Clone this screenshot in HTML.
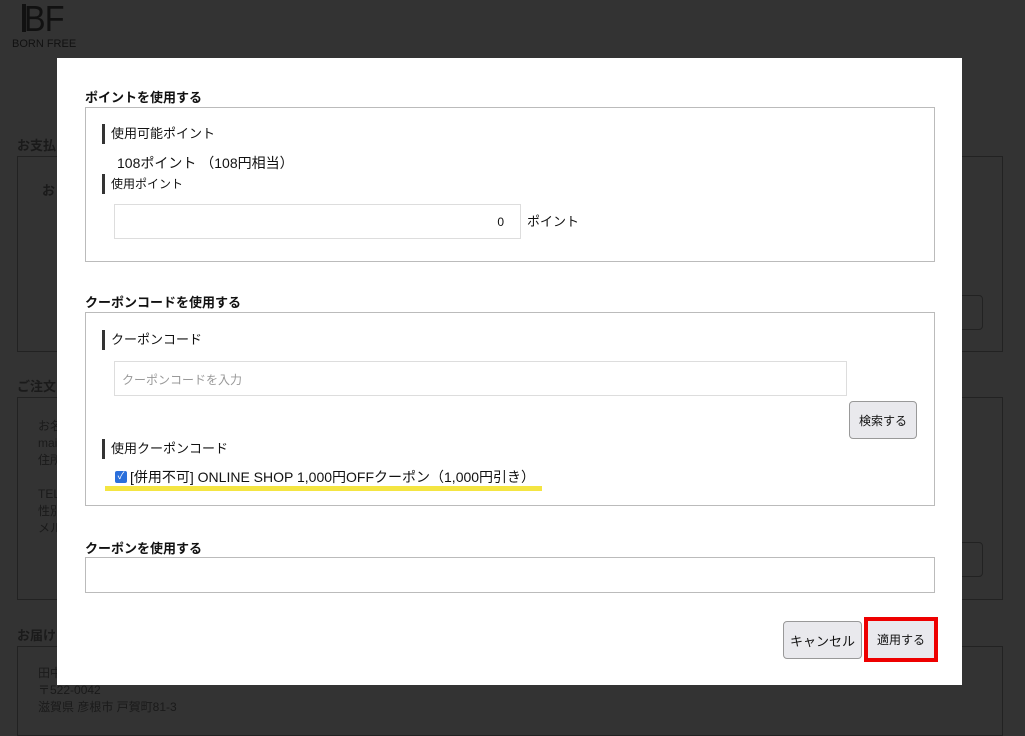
<!DOCTYPE html>
<html><head><meta charset="utf-8"><style>
*{box-sizing:border-box;margin:0;padding:0}
body{width:1025px;height:723px;overflow:hidden;background:#333;font-family:"Liberation Sans","Noto Sans CJK JP",sans-serif;color:#111;position:relative}
.a{position:absolute}
.bg{color:#1a1a1a;font-size:12px}
.bgbox{position:absolute;border:1px solid #222}
.m{position:absolute;left:57px;top:58px;width:905px;height:627px;background:#fff}
.t{position:absolute;font-size:13px;font-weight:bold;color:#111}
.box{position:absolute;border:1px solid #bbb}
.lb{position:absolute;font-size:13px;border-left:3px solid #333;padding-left:6px;line-height:20px}
.in{position:absolute;border:1px solid #ddd;background:#fff}
.btn{position:absolute;background:#e9e9ed;border:1px solid #999;border-radius:4px;font-size:12px;display:flex;align-items:center;justify-content:center}
</style></head><body>
<div class="a" style="left:22px;top:4px;width:4px;height:28px;background:#111"></div>
<div class="a" style="left:24px;top:-2px;font-size:36px;color:#111;letter-spacing:-1px;font-weight:300;transform:scaleX(0.9);transform-origin:left">BF</div>
<div class="a" style="left:12px;top:38px;font-size:11px;color:#111">BORN FREE</div>
<div class="a bg" style="left:17px;top:135px;font-weight:bold;font-size:13px">お支払</div>
<div class="bgbox" style="left:17px;top:156px;width:986px;height:196px"></div>
<div class="a bg" style="left:42px;top:180px;font-weight:bold;font-size:13px">お</div>
<div class="a bg" style="left:17px;top:376px;font-weight:bold;font-size:13px">ご注文</div>
<div class="bgbox" style="left:17px;top:397px;width:986px;height:203px"></div>
<div class="a bg" style="left:38px;top:418px;line-height:17px">お名<br>mai<br>住所<br><br>TEL<br>性別<br>メル</div>
<div class="a bg" style="left:17px;top:625px;font-weight:bold;font-size:13px">お届け</div>
<div class="bgbox" style="left:17px;top:646px;width:986px;height:90px"></div>
<div class="a bg" style="left:38px;top:665px;line-height:17px">田中<br>〒522-0042<br>滋賀県 彦根市 戸賀町81-3</div>
<div class="a" style="left:948px;top:295px;width:35px;height:35px;border:1px solid #222;border-radius:4px"></div>
<div class="a" style="left:948px;top:542px;width:35px;height:35px;border:1px solid #222;border-radius:4px"></div>

<div class="m"></div>
<div class="t" style="left:85px;top:87px">ポイントを使用する</div>
<div class="box" style="left:85px;top:107px;width:850px;height:155px"></div>
<div class="lb" style="left:102px;top:124px">使用可能ポイント</div>
<div class="a" style="left:117px;top:153px;font-size:14px">108ポイント （108円相当）</div>
<div class="lb" style="left:102px;top:174px;font-size:12px">使用ポイント</div>
<div class="in" style="left:114px;top:204px;width:407px;height:35px"><span class="a" style="right:16px;top:10px;font-size:12px">0</span></div>
<div class="a" style="left:527px;top:211px;font-size:13px">ポイント</div>

<div class="t" style="left:85px;top:292px">クーポンコードを使用する</div>
<div class="box" style="left:85px;top:312px;width:850px;height:194px"></div>
<div class="lb" style="left:102px;top:330px">クーポンコード</div>
<div class="in" style="left:114px;top:361px;width:733px;height:35px"><span class="a" style="left:7px;top:9px;font-size:12px;color:#999">クーポンコードを入力</span></div>
<div class="btn" style="left:849px;top:401px;width:68px;height:38px">検索する</div>
<div class="lb" style="left:102px;top:439px">使用クーポンコード</div>
<div class="a" style="left:105px;top:486px;width:437px;height:5px;background:#f4e542"></div>
<div class="a" style="left:115px;top:471px;width:12px;height:12px;background:#2a6fdb;border-radius:2px;color:#fff;font-size:10px;line-height:12px;text-align:center">✓</div>
<div class="a" style="left:130px;top:467px;font-size:14px;white-space:nowrap">[併用不可] ONLINE SHOP 1,000円OFFクーポン（1,000円引き）</div>

<div class="t" style="left:85px;top:538px">クーポンを使用する</div>
<div class="box" style="left:85px;top:557px;width:850px;height:36px"></div>

<div class="btn" style="left:783px;top:621px;width:79px;height:38px;font-size:13px">キャンセル</div>
<div class="a" style="left:864px;top:617px;width:74px;height:45px;border:4px solid #e00;background:#e9e9ed;font-size:12px;display:flex;align-items:center;justify-content:center">適用する</div>
</body></html>
